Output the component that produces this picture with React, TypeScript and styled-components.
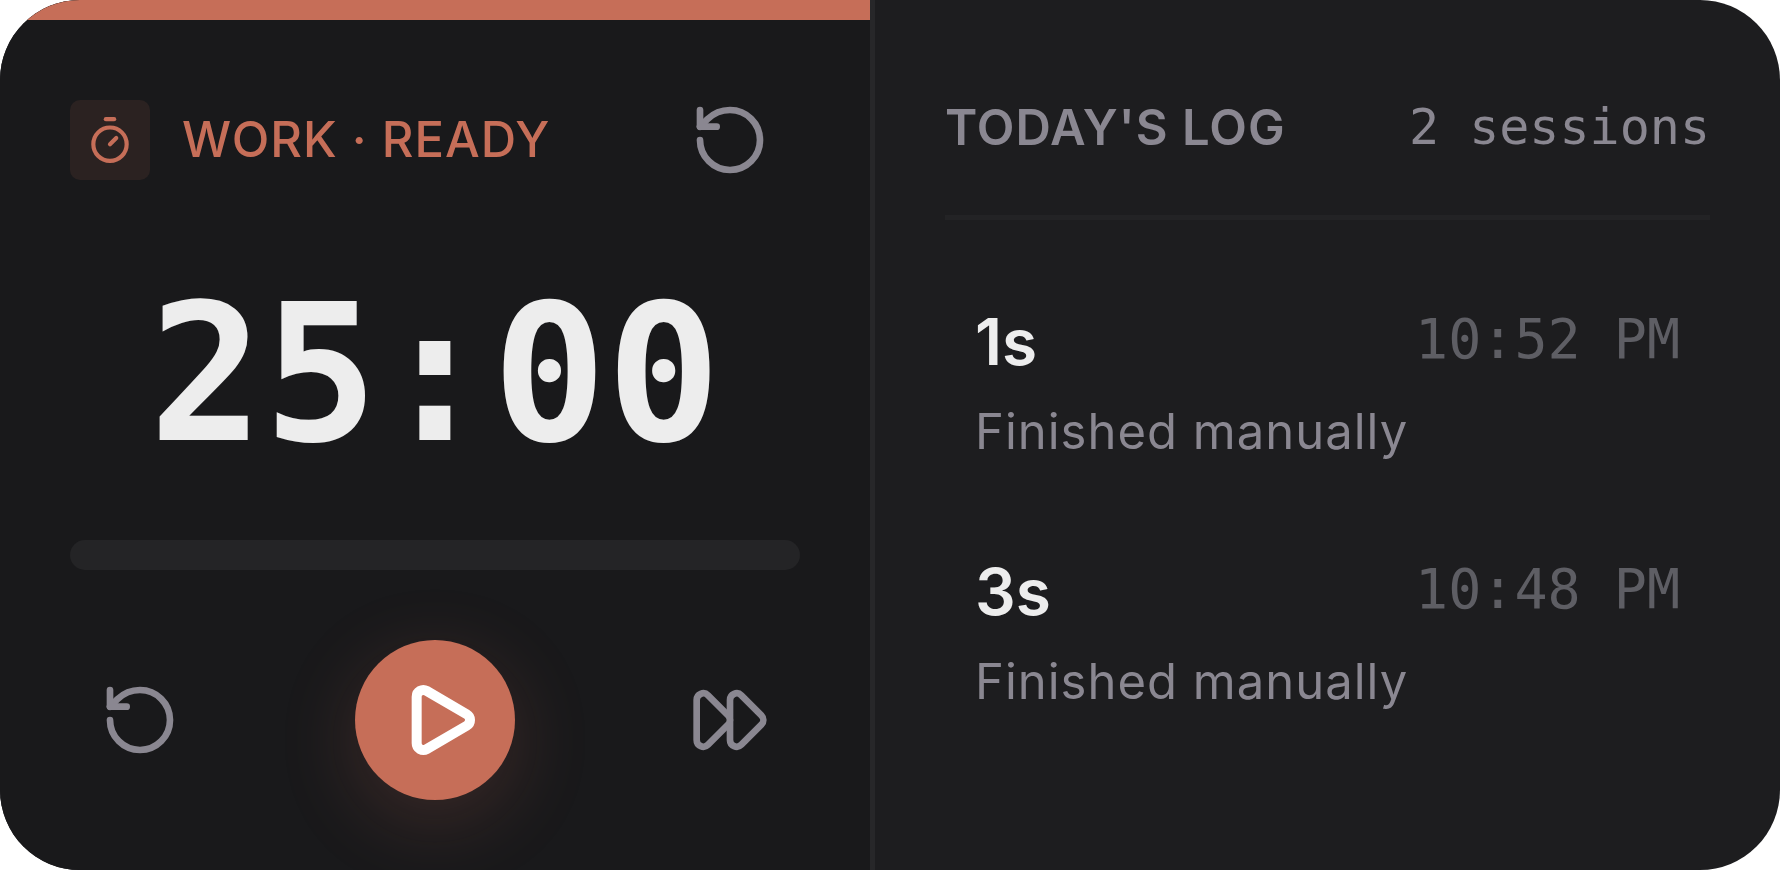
import React from "react";
import styled, { createGlobalStyle } from "styled-components";
import { FastForward, Play, RotateCcw, Timer } from "lucide-react";

const accent = "#c66e58";
const muted = "#8a8791";
const sans = `Inter, "Liberation Sans", sans-serif`;
const mono = `"DejaVu Sans Mono", "Liberation Mono", monospace`;

const GlobalStyle = createGlobalStyle`
  *, *::before, *::after { box-sizing: border-box; }
  body { margin: 0; background: #ffffff; font-family: ${sans}; }
  h2, p, ul, li { margin: 0; padding: 0; list-style: none; font-weight: 400; }
`;

const Card = styled.main`
  display: grid;
  grid-template-columns: 175fr 181fr;
  border-radius: 80px;
  overflow: hidden;
  background: #1d1d1f;
`;

const TimerPanel = styled.section`
  display: flex;
  flex-direction: column;
  background: #19191b;
  border-right: 5px solid #272729;
`;

const AccentBar = styled.div`
  height: 20px;
  background: ${accent};
`;

const TimerBody = styled.div`
  display: flex;
  flex-direction: column;
  padding: 80px 70px 70px;
`;

const StatusRow = styled.header`
  display: flex;
  align-items: center;
  height: 80px;
`;

const Badge = styled.span`
  display: grid;
  place-items: center;
  width: 80px;
  height: 80px;
  border-radius: 10px;
  background: #2b2221;
  color: ${accent};
`;

const StatusText = styled.p`
  flex: 1;
  margin-left: 32px;
  font-size: 49px;
  line-height: 60px;
  font-weight: 500;
  letter-spacing: 1px;
  white-space: nowrap;
  color: ${accent};
`;

const Clock = styled.time`
  margin: 100px 0 70px;
  font-family: ${mono};
  font-size: 190px;
  line-height: 190px;
  font-weight: 700;
  font-variant-numeric: slashed-zero;
  font-feature-settings: "zero" 1;
  text-align: center;
  color: #ededed;
`;

const Track = styled.div`
  height: 30px;
  border-radius: 15px;
  background: #242426;
`;

const Controls = styled.div`
  display: flex;
  align-items: center;
  justify-content: space-between;
  margin-top: 70px;
`;

const IconButton = styled.button`
  display: grid;
  place-items: center;
  width: 140px;
  height: 140px;
  padding: 0;
  border: 0;
  background: transparent;
  color: ${muted};
  cursor: pointer;
`;

const PlayButton = styled(IconButton)`
  width: 160px;
  height: 160px;
  padding-left: 10px;
  border-radius: 50%;
  background: ${accent};
  color: #ffffff;
  box-shadow: 0 20px 80px rgba(198, 110, 88, 0.2);
`;

const LogPanel = styled.section`
  padding: 100px 70px 70px;
`;

const LogHeader = styled.header`
  display: flex;
  justify-content: space-between;
  padding-bottom: 60px;
  border-bottom: 5px solid #232325;
  line-height: 55px;
  color: ${muted};
  white-space: nowrap;
`;

const LogTitle = styled.h2`
  && { font-weight: 600; }
  font-size: 49px;
  letter-spacing: 1px;
`;

const SessionCount = styled.span`
  font-family: ${mono};
  font-size: 50px;
`;

const LogList = styled.ul`
  && { padding-top: 52px; }
  display: flex;
  flex-direction: column;
  gap: 30px;
`;

const LogItem = styled.li`
  && { padding: 30px; }
`;

const LogRow = styled.div`
  display: flex;
  justify-content: space-between;
  align-items: flex-start;
`;

const Duration = styled.strong`
  font-size: 64px;
  line-height: 80px;
  font-weight: 600;
  color: #ededed;
`;

const FinishedAt = styled.time`
  font-family: ${mono};
  font-size: 55px;
  line-height: 75px;
  font-variant-numeric: slashed-zero;
  font-feature-settings: "zero" 1;
  color: #5e5e64;
`;

const Note = styled.p`
  && { margin-top: 20px; }
  font-size: 49px;
  line-height: 60px;
  letter-spacing: 1px;
  color: ${muted};
`;

interface Session {
  duration: string;
  finishedAt: string;
  note: string;
}

const sessions: Session[] = [
  { duration: "1s", finishedAt: "10:52 PM", note: "Finished manually" },
  { duration: "3s", finishedAt: "10:48 PM", note: "Finished manually" },
];

export default function App() {
  return (
    <>
      <GlobalStyle />
      <Card>
        <TimerPanel>
          <AccentBar />
          <TimerBody>
            <StatusRow>
              <Badge>
                <Timer size={50} />
              </Badge>
              <StatusText>WORK · READY</StatusText>
              <IconButton type="button" aria-label="Reset session">
                <RotateCcw size={80} />
              </IconButton>
            </StatusRow>
            <Clock>25:00</Clock>
            <Track role="progressbar" aria-label="Progress" aria-valuenow={0} />
            <Controls>
              <IconButton type="button" aria-label="Restart timer">
                <RotateCcw size={80} />
              </IconButton>
              <PlayButton type="button" aria-label="Start timer">
                <Play size={80} strokeWidth={3} />
              </PlayButton>
              <IconButton type="button" aria-label="Skip">
                <FastForward size={80} />
              </IconButton>
            </Controls>
          </TimerBody>
        </TimerPanel>
        <LogPanel>
          <LogHeader>
            <LogTitle>TODAY'S LOG</LogTitle>
            <SessionCount>{sessions.length} sessions</SessionCount>
          </LogHeader>
          <LogList>
            {sessions.map((s) => (
              <LogItem key={s.finishedAt}>
                <LogRow>
                  <Duration>{s.duration}</Duration>
                  <FinishedAt>{s.finishedAt}</FinishedAt>
                </LogRow>
                <Note>{s.note}</Note>
              </LogItem>
            ))}
          </LogList>
        </LogPanel>
      </Card>
    </>
  );
}
